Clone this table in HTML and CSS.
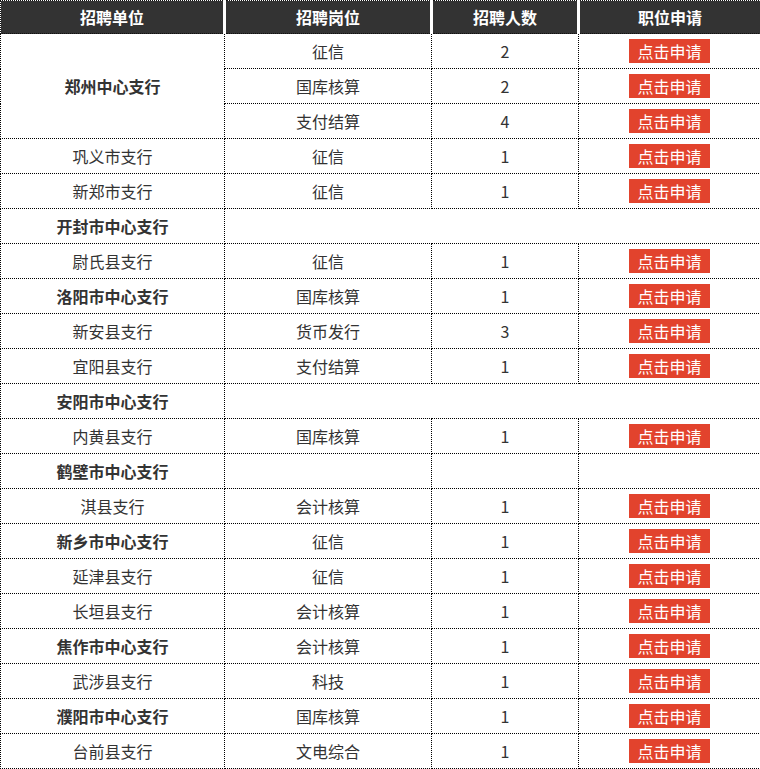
FILE: index.html
```html
<!DOCTYPE html>
<html lang="zh-CN">
<head>
<meta charset="utf-8">
<title>招聘岗位</title>
<link rel="stylesheet" href="styles.css">
</head>
<body>
<table class="jobs">
  <colgroup>
    <col class="c1"><col class="c2"><col class="c3"><col class="c4">
  </colgroup>
  <thead>
    <tr><th>招聘单位</th><th>招聘岗位</th><th>招聘人数</th><th>职位申请</th></tr>
  </thead>
  <tbody>
    <tr><td rowspan="3" class="main">郑州中心支行</td><td>征信</td><td>2</td><td><span class="btn">点击申请</span></td></tr>
    <tr><td>国库核算</td><td>2</td><td><span class="btn">点击申请</span></td></tr>
    <tr><td>支付结算</td><td>4</td><td><span class="btn">点击申请</span></td></tr>
    <tr><td>巩义市支行</td><td>征信</td><td>1</td><td><span class="btn">点击申请</span></td></tr>
    <tr><td>新郑市支行</td><td>征信</td><td>1</td><td><span class="btn">点击申请</span></td></tr>
    <tr><td class="main">开封市中心支行</td><td colspan="3"></td></tr>
    <tr><td>尉氏县支行</td><td>征信</td><td>1</td><td><span class="btn">点击申请</span></td></tr>
    <tr><td class="main">洛阳市中心支行</td><td>国库核算</td><td>1</td><td><span class="btn">点击申请</span></td></tr>
    <tr><td>新安县支行</td><td>货币发行</td><td>3</td><td><span class="btn">点击申请</span></td></tr>
    <tr><td>宜阳县支行</td><td>支付结算</td><td>1</td><td><span class="btn">点击申请</span></td></tr>
    <tr><td class="main">安阳市中心支行</td><td colspan="3"></td></tr>
    <tr><td>内黄县支行</td><td>国库核算</td><td>1</td><td><span class="btn">点击申请</span></td></tr>
    <tr><td class="main">鹤壁市中心支行</td><td></td><td></td><td></td></tr>
    <tr><td>淇县支行</td><td>会计核算</td><td>1</td><td><span class="btn">点击申请</span></td></tr>
    <tr><td class="main">新乡市中心支行</td><td>征信</td><td>1</td><td><span class="btn">点击申请</span></td></tr>
    <tr><td>延津县支行</td><td>征信</td><td>1</td><td><span class="btn">点击申请</span></td></tr>
    <tr><td>长垣县支行</td><td>会计核算</td><td>1</td><td><span class="btn">点击申请</span></td></tr>
    <tr><td class="main">焦作市中心支行</td><td>会计核算</td><td>1</td><td><span class="btn">点击申请</span></td></tr>
    <tr><td>武涉县支行</td><td>科技</td><td>1</td><td><span class="btn">点击申请</span></td></tr>
    <tr><td class="main">濮阳市中心支行</td><td>国库核算</td><td>1</td><td><span class="btn">点击申请</span></td></tr>
    <tr><td>台前县支行</td><td>文电综合</td><td>1</td><td><span class="btn">点击申请</span></td></tr>
  </tbody>
</table>
</body>
</html>
```

FILE: styles.css
```css
html, body {
  margin: 0;
  padding: 0;
  background: #fff;
}
body {
  font-family: "Microsoft YaHei", "Noto Sans CJK SC", "Noto Sans", sans-serif;
  font-size: 16px;
  color: #333;
}
.jobs {
  width: 760px;
  border-collapse: collapse;
  table-layout: fixed;
}
.c1 { width: 224px; }
.c2 { width: 207px; }
.c3 { width: 147px; }
.c4 { width: 182px; }
.jobs th {
  background: #333;
  color: #fff;
  font-weight: bold;
  font-size: 16px;
  height: 32px;
  padding: 0;
  line-height: 20px;
  border: 1px dotted #111;
}
.jobs th + th {
  border-left: 3px solid #fff;
}
.jobs td {
  height: 34px;
  padding: 0;
  text-align: center;
  vertical-align: middle;
  border: 1px dotted #000;
  line-height: 20px;
}
.jobs td.main {
  font-weight: bold;
}
.btn {
  display: inline-block;
  background: #e2432d;
  color: #fff;
  line-height: 24px;
  height: 24px;
  padding: 0 8px;
  vertical-align: middle;
}
```
